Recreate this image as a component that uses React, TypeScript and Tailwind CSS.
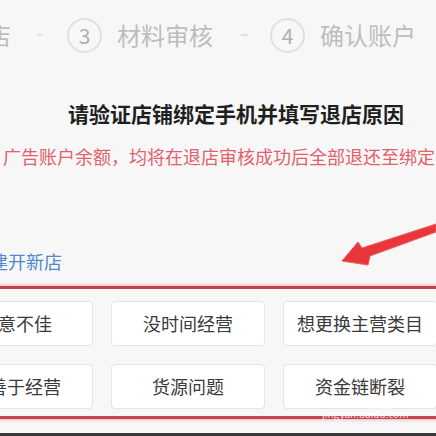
import React from 'react';

const reasons = ['生意不佳', '没时间经营', '想更换主营类目', '不善于经营', '货源问题', '资金链断裂'];

const StepCircle = ({ n }: { n: number }) => (
  <div className="w-[35px] h-[35px] shrink-0 rounded-full border-2 border-[#e0e0e0] flex items-center justify-center text-[21px] text-[#b0b0b0] leading-none">
    {n}
  </div>
);

const Arrow = () => (
  <svg className="absolute left-[330px] top-[210px]" width="106" height="60" viewBox="0 0 106 60">
    <path d="M12 51 L28 32 L32 38 L106 14 L106 22 L40 46 L38 55 Z" fill="#e8363a" stroke="#ef5a5d" strokeWidth="1" strokeLinejoin="round" />
  </svg>
);

export default function App() {
  return (
    <div
      className="relative w-[436px] h-[436px] overflow-hidden bg-[#f7f7f8] flex flex-col"
      style={{ fontFamily: '"Noto Sans CJK SC", "Noto Sans", sans-serif' }}
    >
      {/* steps */}
      <div className="mt-[17px] h-[36px] flex items-center whitespace-nowrap text-[24px] text-[#bdbdbd] leading-none">
        <span className="ml-[-13px]">店</span>
        <span className="ml-[26px] w-[6px] h-[2px] bg-[#e2e2e2]" />
        <span className="ml-[24px]"><StepCircle n={3} /></span>
        <span className="ml-[15px]">材料审核</span>
        <span className="ml-[28px] w-[7px] h-[2px] bg-[#e2e2e2]" />
        <span className="ml-[22px]"><StepCircle n={4} /></span>
        <span className="ml-[15px]">确认账户</span>
      </div>

      {/* title */}
      <div className="mt-[48px] pl-[68px] h-[24px] text-[21px] leading-[24px] font-bold text-[#1f1f1f] whitespace-nowrap">
        请验证店铺绑定手机并填写退店原因
      </div>

      {/* notice */}
      <div className="mt-[21px] pl-[3px] h-[20px] text-[18px] leading-[20px] text-[#e2606c] whitespace-nowrap">
        广告账户余额，均将在退店审核成功后全部退还至绑定手机
      </div>

      {/* link */}
      <div className="mt-[85px] ml-[-10px] h-[20px] text-[18px] leading-[20px] text-[#4f88cc] whitespace-nowrap">
        建开新店
      </div>

      {/* reasons box */}
      <div className="mt-[15px] mx-[-10px] border-y-[3px] border-[#c4454d] shadow-[0_0_3px_1px_rgba(230,120,125,0.5)] pt-[12px] pb-[7px]">
        <div className="ml-[-51px] grid grid-cols-[154px_154px_154px] gap-[18px] w-max">
          {reasons.map((r) => (
            <div
              key={r}
              className="h-[45px] bg-white border border-[#e4e4e4] rounded-[4px] flex items-center justify-center text-[18px] text-[#3a3a3a] whitespace-nowrap"
            >
              {r}
            </div>
          ))}
        </div>
      </div>

      <div className="flex-1" />
      <div className="h-[3px] bg-[#3a3a3a]" />

      <Arrow />

      {/* watermark */}
      <div className="absolute left-[322px] top-[394px] text-[14px] leading-[14px] font-bold text-white/80 tracking-wide">
        Baidu经验
      </div>
      <div className="absolute left-[322px] top-[409px] text-[10px] leading-[10px] text-white/80">
        jingyan.baidu.com
      </div>
    </div>
  );
}
